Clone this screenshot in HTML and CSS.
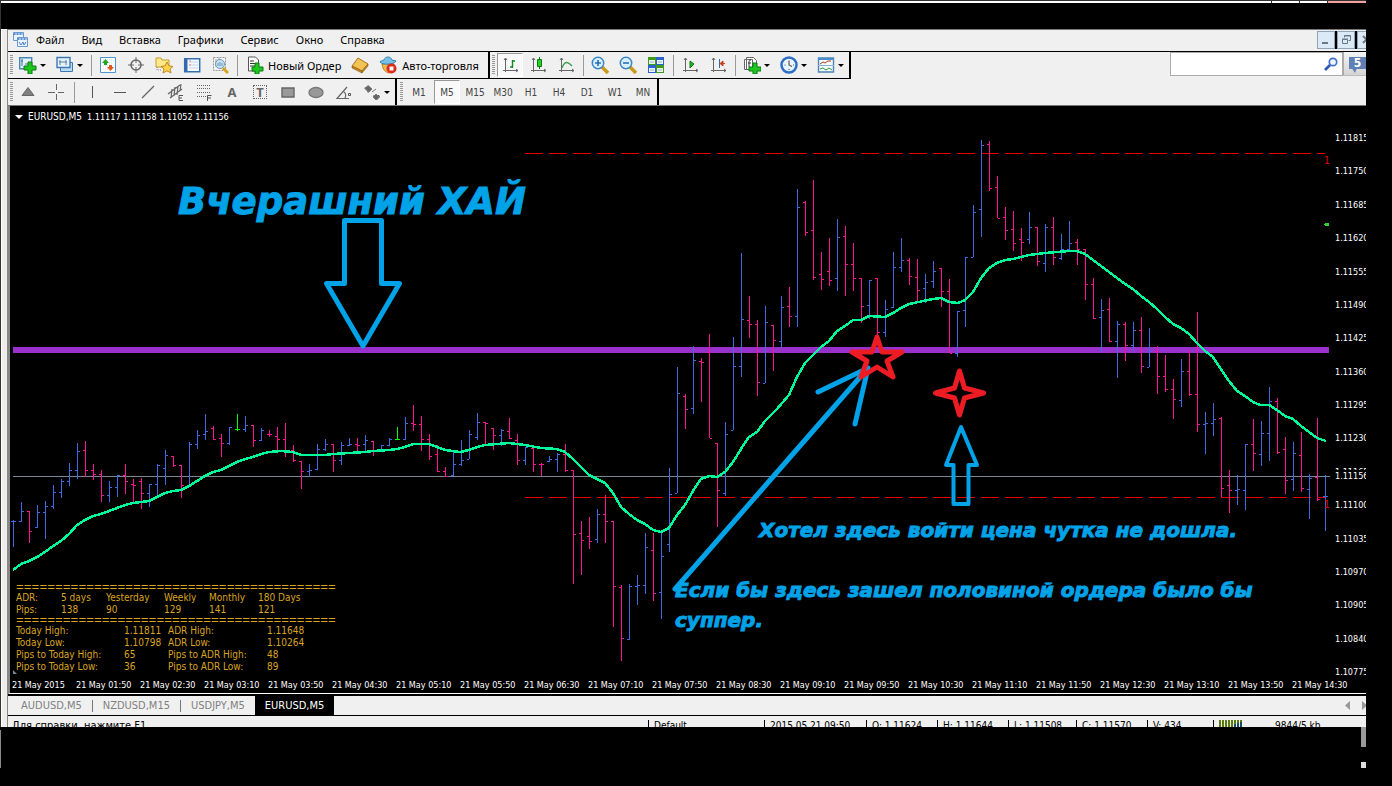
FILE: index.html
```html
<!DOCTYPE html>
<html lang="ru">
<head>
<meta charset="utf-8">
<title>EURUSD,M5</title>
<link rel="stylesheet" href="styles.css">
</head>
<body>
<div class="frame">
<div class="titlebar"><i></i><i></i><i></i></div>
<div class="window">
<header class="menubar">
<svg class="logo" width="15" height="15" viewBox="0 0 15 15"><g fill="#eaf2fb" stroke="#6a9bd0"><path d="M.5.5h10v8H.5z"/><path d="M4.500 5.500h10v9h-10z"/></g><path d="M.5 2h10M4.500 7h10" stroke="#5a8fd0" stroke-width="2" stroke-dasharray="2 1"/><path d="M6 10l2 3 2-3 1 3 2-3" stroke="#4f7fc8" fill="none"/></svg>
<nav class="menu"><a href="#">Файл</a><a href="#">Вид</a><a href="#">Вставка</a><a href="#">Графики</a><a href="#">Сервис</a><a href="#">Окно</a><a href="#">Справка</a></nav>
<div class="winbtns">
<button aria-label="Свернуть"><svg width="14" height="14"><path d="M3 10h6" stroke="#6c7a88" stroke-width="2"/></svg></button>
<button aria-label="Восстановить"><svg width="14" height="14" fill="none" stroke="#6c7a88"><path d="M5.500 4.500v-2h6v5h-2M3.500 6.500h5v4h-5zM3 6h6M5 3h7"/></svg></button>
<button aria-label="Закрыть"><svg width="14" height="14"><path d="M4 3l7 7M11 3l-7 7" stroke="#6c7a88" stroke-width="2"/></svg></button>
</div>
</header>

<div class="bars">
<div class="toolrow">
<div class="group">
<span class="grip"></span>
<button class="drop" aria-label="Новый график"><svg class="ic" viewBox="0 0 18 18"><path d="M.7 1.700h12v11h-12z" fill="#e4f1fb" stroke="#4a86b8" stroke-width="1.400"/><path d="M3 3v7M2 5h2M6 8h3" stroke="#3b6e9a"/><path d="M9 6h4v4h4v4h-4v4H9v-4H5v-4h4z" fill="#1fc61f" stroke="#0b7a10"/></svg><b class="ar"></b></button>
<button class="drop" aria-label="Профили"><svg class="ic" viewBox="0 0 18 18"><path d="M4.500 6.500h12v9h-12z" fill="#bcdcf3" stroke="#3c78b4"/><path d="M1 1.500h13v10H1z" fill="#e6f2fb" stroke="#3c78b4" stroke-width="1.400"/><path d="M4 4v5M3 6h8M10 4v5" stroke="#55809f"/></svg><b class="ar"></b></button>
<i class="sep"></i>
<button aria-label="Обзор рынка"><svg class="ic" viewBox="0 0 18 18"><path d="M1.500 1.500h15v15h-15z" fill="#fff" stroke="#4e94cf"/><path d="M4 4h10M4 7h10M4 10h10M4 13h10" stroke="#cfd8df" stroke-dasharray="1 1"/><path d="M6.500 3l3.500 4H8v2H5V7H3z" fill="#1fa81f"/><path d="M11.500 15l3.500-4h-2V9h-3v2H8z" fill="#e2551c"/></svg></button>
<button aria-label="Окно данных"><svg class="ic" viewBox="0 0 18 18" fill="none" stroke="#666"><circle cx="9" cy="9" r="5" stroke-width="1.500"/><path d="M9 1v6M9 11v6M1 9h6M11 9h6"/></svg></button>
<button aria-label="Навигатор"><svg class="ic" viewBox="0 0 18 18"><path d="M1 2h5l1 2h7v7H1z" fill="#ffe98a" stroke="#c79b2a"/><path d="M2 11v3h4" stroke="#888" fill="none" stroke-dasharray="1 1"/><path d="M12 6l2 4 4 .4-3 2.600 1 4-4-2.200L8 17l1-4-3-2.600 4-.4z" fill="#ffd34d" stroke="#c08a18"/></svg></button>
<button aria-label="Терминал"><svg class="ic" viewBox="0 0 18 18"><path d="M1.700 2.700h15v13h-15z" fill="#f6fbff" stroke="#2f6fb2" stroke-width="1.500"/><path d="M3 3v12" stroke="#3568b0" stroke-width="3"/><path d="M6 6h9M6 9h9M6 12h9" stroke="#c6d5e6"/><path d="M6.500 5h1M6.500 9h1" stroke="#c22"/></svg></button>
<button aria-label="Тестер стратегий"><svg class="ic" viewBox="0 0 18 18"><path d="M2.500 1.500h12v13h-12z" fill="#f4f4f4" stroke="#999" stroke-dasharray="2 1"/><path d="M5 3v8M8 2v9" stroke="#999"/><circle cx="9" cy="8" r="4.500" fill="#bfe3fa" fill-opacity=".9" stroke="#7198b5"/><path d="M7 7v3M9 6v4M11 7v3" stroke="#6f93ae"/><path d="M12 12l5 5" stroke="#d8a520" stroke-width="3"/></svg></button>
<i class="sep"></i>
<button class="wide order"><svg class="ic" viewBox="0 0 18 18"><path d="M2.500 1h7l3 3v11h-10z" fill="#fff" stroke="#555"/><path d="M4 5h4M4 7.500h6M4 10h5" stroke="#333"/><path d="M9 7h4v4h4v4h-4v3H9v-3H6v-4h3z" fill="#1fc61f" stroke="#0b7a10"/></svg><span>Новый Ордер</span></button>
<button aria-label="MetaEditor"><svg class="ic" viewBox="0 0 18 18"><path d="M1 10l6-8 10 6-6 7z" fill="#f3c355" stroke="#a87218"/><path d="M1 10v2l10 5v-2zM11 17l6-7V8l-6 7z" fill="#c98a22" stroke="#8b5c12" stroke-width=".6"/></svg></button>
<button class="wide auto"><svg class="ic" viewBox="0 0 18 18"><path d="M3 8c1 6 3 8 7 9 4-2 5-5 5-9z" fill="#f2b84d" stroke="#bd7d1c"/><path d="M1 6c2 3 14 3 16-1-1-1-3 0-4-1-1-4-7-4-8 0-2 1-4 1-4 2z" fill="#79c0e8" stroke="#3483b5"/><circle cx="12.500" cy="12.500" r="5" fill="#dd2a1b"/><path d="M10.500 10.500h4v4h-4z" fill="#fff"/></svg><span>Авто-торговля</span></button>
</div>
<div class="group">
<span class="grip"></span>
<button class="on" aria-label="Бары"><svg class="ic" viewBox="0 0 18 18"><path d="M4.500 2v14M2 14.500h15M3 4l1.500-2L6 4M15 13l2 1.500L15 16" fill="none" stroke="#666"/><path d="M11.500 4v8M11 5h3M9 11h3" stroke="#0b8a1c" stroke-width="1.400"/></svg></button>
<button aria-label="Свечи"><svg class="ic" viewBox="0 0 18 18"><path d="M4.500 2v14M2 14.500h15M3 4l1.500-2L6 4M15 13l2 1.500L15 16" fill="none" stroke="#666"/><path d="M10.500 1v12" stroke="#0b7a10"/><path d="M8.500 3.500h4v7h-4z" fill="#27d027" stroke="#0b7a10"/></svg></button>
<button aria-label="Линия"><svg class="ic" viewBox="0 0 18 18"><path d="M4.500 2v14M2 14.500h15M3 4l1.500-2L6 4M15 13l2 1.500L15 16" fill="none" stroke="#666"/><path d="M5 12c3-8 6-6 10-2" fill="none" stroke="#3da04a" stroke-width="1.300"/></svg></button>
<i class="sep"></i>
<button aria-label="Увеличить"><svg class="ic" viewBox="0 0 18 18"><path d="M11 11l6 6" stroke="#c9991a" stroke-width="3.500"/><circle cx="7" cy="7" r="5.700" fill="#d8f0fd" stroke="#3a86c4" stroke-width="1.500"/><path d="M4 7h6M7 4v6" stroke="#2a6fb0" stroke-width="1.600"/></svg></button>
<button aria-label="Уменьшить"><svg class="ic" viewBox="0 0 18 18"><path d="M11 11l6 6" stroke="#c9991a" stroke-width="3.500"/><circle cx="7" cy="7" r="5.700" fill="#d8f0fd" stroke="#3a86c4" stroke-width="1.500"/><path d="M4 7h6" stroke="#2a6fb0" stroke-width="1.600"/></svg></button>
<button aria-label="Окна мозаикой"><svg class="ic" viewBox="0 0 18 18"><path d="M1 1h8v8H1zM9 9h8v8H9z" fill="#3d9a1c"/><path d="M9 1h8v8H9zM1 9h8v8H1z" fill="#2b61d0"/><path d="M2 4h6v4H2zM10 4h6v4h-6zM2 12h6v4H2zM10 12h6v4h-6z" fill="#eef6ee"/><path d="M3 6h4M11 6h4M3 14h4M11 14h4" stroke="#9cb6c8"/></svg></button>
<i class="sep"></i>
<button aria-label="Автосдвиг"><svg class="ic" viewBox="0 0 18 18"><path d="M4.500 2v14M2 14.500h15M3 4l1.500-2L6 4M15 13l2 1.500L15 16" fill="none" stroke="#666"/><path d="M9 5l4 3-4 4z" fill="#27b527" stroke="#0b7a10"/></svg></button>
<button aria-label="Сдвиг графика"><svg class="ic" viewBox="0 0 18 18"><path d="M4.500 2v14M2 14.500h15M3 4l1.500-2L6 4M15 13l2 1.500L15 16" fill="none" stroke="#666"/><path d="M10.500 3v9" stroke="#2d6ca8"/><path d="M16 7.500h-4M14 5l-3 2.500L14 10z" stroke="#c8401c" fill="#c8401c"/></svg></button>
<i class="sep"></i>
<button class="drop" aria-label="Индикаторы"><svg class="ic" viewBox="0 0 18 18"><path d="M1.500 3.500h8v10h-8zM3.500 1.500h7l3 3v9h-10z" fill="#fff" stroke="#666"/><path d="M8 4c-2 0-2 1-2 3v4M5 7h3" stroke="#333" fill="none"/><path d="M10 7h4v4h4v4h-4v3h-4v-3H6v-4h4z" fill="#1fc61f" stroke="#0b7a10"/></svg><b class="ar"></b></button>
<button class="drop" aria-label="Периоды"><svg class="ic" viewBox="0 0 18 18"><circle cx="9" cy="9" r="7.500" fill="#e8f4ff" stroke="#2d6fc4" stroke-width="2.500"/><path d="M9 4.500V9l3 1.500M4.500 9h1M13 9h1M9 13v1" fill="none" stroke="#555" stroke-width="1.200"/></svg><b class="ar"></b></button>
<button class="drop" aria-label="Шаблоны"><svg class="ic" viewBox="0 0 18 18"><path d="M1.500 2h15v14h-15z" fill="#f6fbff" stroke="#4b83b5" stroke-width="1.400"/><path d="M1 3h16" stroke="#4b8ccc" stroke-width="2"/><path d="M1 9.500h16" stroke="#8fb0cc"/><path d="M3 8l3-2 2 1 3-2 3 0" stroke="#b03a1c" fill="none"/><path d="M3 13l3-1 3 2 3-2 3 2" stroke="#2c9a3c" fill="none"/></svg><b class="ar"></b></button>
</div>
<div class="searchbox"><input type="text" aria-label="Поиск"><svg width="14" height="14" viewBox="0 0 14 14"><circle cx="9" cy="5" r="3.700" fill="#eef5ff" stroke="#3f6fcf" stroke-width="1.700"/><path d="M6 8l-5 5" stroke="#2c55b8" stroke-width="2.600"/></svg></div>
<button class="chat" aria-label="Сообщения"><span>5</span></button>
</div>

<div class="toolrow two">
<div class="group">
<span class="grip"></span>
<button aria-label="Курсор"><svg class="ic" viewBox="0 0 18 18"><path d="M9 4.500l6 8H3z" fill="#808080" stroke="#666"/></svg></button>
<button aria-label="Перекрестие"><svg class="ic" viewBox="0 0 18 18"><path d="M9.500 1v6M9.500 11v6M1 9.500h7M11 9.500h6" stroke="#666" fill="none"/></svg></button>
<i class="sep"></i>
<button aria-label="Вертикальная линия"><svg class="ic" viewBox="0 0 18 18"><path d="M9.500 3v12" stroke="#555"/></svg></button>
<button aria-label="Горизонтальная линия"><svg class="ic" viewBox="0 0 18 18"><path d="M3 9.500h12" stroke="#555"/></svg></button>
<button aria-label="Трендовая линия"><svg class="ic" viewBox="0 0 18 18"><path d="M3 15L15 3" stroke="#666" stroke-width="1.300"/></svg></button>
<button aria-label="Канал"><svg class="ic" viewBox="0 0 18 18"><path d="M1 11l12-9M3 15l12-9M5 6l-1 9M8 4l-1 9M11 3l-1 9M14 1l-1 7" stroke="#666" stroke-width="1.200"/><path d="M16 12.500h-4v5h4M12 15h3" stroke="#555" fill="none"/></svg></button>
<button aria-label="Фибоначчи"><svg class="ic" viewBox="0 0 18 18"><path d="M2 2.500h14M2 5.500h14M2 9.500h14M2 13.500h9" stroke="#666" stroke-dasharray="1 1"/><path d="M12.500 18v-5.500h4M12 15h4" stroke="#555" fill="none"/></svg></button>
<button aria-label="Текст"><span class="glyph">A</span></button>
<button aria-label="Метка"><span class="glyph tbox">T</span></button>
<button aria-label="Прямоугольник"><svg class="ic" viewBox="0 0 18 18"><path d="M3 5h12v9H3z" fill="#999" stroke="#666" stroke-width="1.400"/></svg></button>
<button aria-label="Эллипс"><svg class="ic" viewBox="0 0 18 18"><ellipse cx="9" cy="9.500" rx="7" ry="5" fill="#999" stroke="#777" stroke-width="1.400"/></svg></button>
<button aria-label="Угол"><svg class="ic" viewBox="0 0 18 18"><path d="M14 15.500H2L12 4M8 8c3 2 3 5 2 7" stroke="#666" fill="none" stroke-width="1.200"/><path d="M13.500 10.500h2v2h-2z" fill="none" stroke="#555"/></svg></button>
<button class="drop" aria-label="Стрелки"><svg class="ic" viewBox="0 0 18 18"><path d="M5 2l4 4-4 4-1-2-3-3 3-1zM14 17l-4-4 1-1h5l1 2z" fill="#555"/><path d="M5 3l4 3-3 3-4-4zM9 9l4-3M13 11l3 3-3 3-3-3z" fill="#666" stroke="#777"/></svg><b class="ar"></b></button>
</div>
<div class="group tf">
<span class="grip"></span>
<button>M1</button><button class="on">M5</button><button>M15</button><button>M30</button><button>H1</button><button>H4</button><button>D1</button><button>W1</button><button>MN</button>
</div>
</div>
</div>

<main class="chart">
<svg class="plot" viewBox="10 106 1325 568">
<rect x="13" y="347" width="1316" height="6" fill="#9932cc"/>
<g stroke="#e60000" stroke-dasharray="18 6"><path d="M525 153.500H1325M525 497.500H1325"/></g>
<path d="M13 476.500H1330" stroke="#778899"/>
<g id="bars" shape-rendering="crispEdges" fill="none"></g>
<polyline id="ma" fill="none" stroke="#00fa9a" stroke-width="2.500" stroke-linejoin="round" shape-rendering="crispEdges"/>
<path d="M1324 224h1v-1h4v3h-4v-1h-1z" fill="#32cd32"/>
<g class="mark"><text x="1324" y="164">1</text><text x="1324" y="508">1</text></g>
<path d="M13 670v5h5z" fill="#778899"/>
<g fill="none" stroke="#00a2e8" stroke-width="5" stroke-linejoin="round" stroke-linecap="round">
<path d="M344.500 220.500h37v63h18L363 346l-36.500-62.500h18z"/>
<path d="M961 427l-15 38h7.500v39h15v-39h8.500z" stroke-width="4"/>
<path d="M675 589L868 368L818 392M868 368L855 424"/>
</g>
<g fill="none" stroke="#ed1c24" stroke-width="5" stroke-linejoin="round">
<path d="M877 337l5 15h20l-15 9 6 16-16-10-16 10 6-16-15-9h20z"/>
<path d="M959.500 371l5 17 19 5-19 5-5 17-5-17-19-5 19-5z"/>
</g>
<g class="note"><text class="big" x="178" y="214">Вчерашний ХАЙ</text><text x="759" y="537">Хотел здесь войти цена чутка не дошла.</text><text x="675" y="597">Если бы здесь зашел половиной ордера было бы</text><text x="675" y="627">суппер.</text></g>
</svg>
<div class="prices">
<span>1.11815</span><span>1.11750</span><span>1.11685</span><span>1.11620</span><span>1.11555</span><span>1.11490</span><span>1.11425</span><span>1.11360</span><span>1.11295</span><span>1.11230</span><span>1.11165</span><span>1.11100</span><span>1.11035</span><span>1.10970</span><span>1.10905</span><span>1.10840</span><span>1.10775</span>
<em>1.11156</em>
</div>
<div class="times"><span>21 May 2015</span><span>21 May 01:50</span><span>21 May 02:30</span><span>21 May 03:10</span><span>21 May 03:50</span><span>21 May 04:30</span><span>21 May 05:10</span><span>21 May 05:50</span><span>21 May 06:30</span><span>21 May 07:10</span><span>21 May 07:50</span><span>21 May 08:30</span><span>21 May 09:10</span><span>21 May 09:50</span><span>21 May 10:30</span><span>21 May 11:10</span><span>21 May 11:50</span><span>21 May 12:30</span><span>21 May 13:10</span><span>21 May 13:50</span><span>21 May 14:30</span></div>
<div class="symbol"><b class="tri"></b><span class="name">EURUSD,M5</span><span>1.11117 1.11158 1.11052 1.11156</span></div>
<div class="adr">
<div class="rule">=========================================</div>
<div class="r1"><span>ADR:</span><span>5 days</span><span>Yesterday</span><span>Weekly</span><span>Monthly</span><span>180 Days</span></div>
<div class="r1"><span>Pips:</span><span>138</span><span>90</span><span>129</span><span>141</span><span>121</span></div>
<div class="rule">=========================================</div>
<div class="r2"><span>Today High:</span><span>1.11811</span><span>ADR High:</span><span>1.11648</span></div>
<div class="r2"><span>Today Low:</span><span>1.10798</span><span>ADR Low:</span><span>1.10264</span></div>
<div class="r2"><span>Pips to Today High:</span><span>65</span><span>Pips to ADR High:</span><span>48</span></div>
<div class="r2"><span>Pips to Today Low:</span><span>36</span><span>Pips to ADR Low:</span><span>89</span></div>
</div>
</main>

<div class="tabs"><a href="#">AUDUSD,M5</a><a href="#">NZDUSD,M15</a><a href="#">USDJPY,M5</a><a href="#" class="cur">EURUSD,M5</a><svg width="22" height="9"><path d="M6 0v9L1 4.500zM18 0v9l5-4.500z" fill="#999"/></svg></div>
<footer class="status"><span class="help">Для справки, нажмите F1</span><span class="c115">Default</span><span class="c103">2015.05.21 09:50</span><span class="c71">O: 1.11624</span><span class="c71">H: 1.11644</span><span class="c68">L: 1.11508</span><span class="c71">C: 1.11570</span><span class="c66">V: 434</span><span class="net"><svg width="24" height="14"><path d="M1 0v12M4 0v12M7 0v12M10 0v12M13 0v12M16 0v12M19 0v12M22 0v12" stroke="#5a7a10" stroke-width="2"/><path d="M16 4v8M19 3v9M22 2v10" stroke="#1a4a6a" stroke-width="2"/></svg>9844/5 kb</span></footer>
</div>
<div class="below"><i></i><div><b></b><b></b></div></div>
</div>
<script src="chart.js"></script>
</body>
</html>
```
FILE: styles.css
```css
* { box-sizing: border-box; }
body { margin: 0; background: #000; font-family: "DejaVu Sans Condensed", "DejaVu Sans", sans-serif; font-size: 10px; color: #000; }
button { background: none; border: 0; padding: 0; margin: 0; color: inherit; font: inherit; }
a { color: inherit; text-decoration: none; }
svg { display: block; flex: none; }
.frame { margin-right: 26px; overflow: hidden; }
.titlebar { height: 29px; border-top: 1px solid #333; border-left: 1px solid #333; display: flex; justify-content: flex-end; background: linear-gradient(#fff 2px, #000 2px); }
.titlebar i { width: 28px; height: 2px; border-left: 1px solid #333; }
.titlebar i:last-child { width: 39px; background: #f2a0a0; }
.window { border-left: 1px solid #333; padding-left: 7px; background: linear-gradient(90deg, #fff 1px, #efecec 1px, #efecec 6px, #888 6px, #888 7px, #f0f0f0 7px); }
.menubar { height: 23px; border-top: 1px solid #777; border-bottom: 1px solid #000; display: flex; align-items: center; padding: 0 0 2px 5px; font: 11px "Noto Sans", sans-serif; }
.menu { display: flex; gap: 17px; margin-left: 8px; flex: 1; }
.winbtns { display: flex; gap: 2px; width: 49px; height: 18px; overflow: hidden; background: #000; }
.winbtns button { flex: none; width: 18px; border: 1px solid #8ea3b6; background: #dceaf7; padding: 1px; }
.bars { border-bottom: 1px solid #777; height: 54px; }
.toolrow { display: flex; height: 27px; }
.group { display: flex; align-items: center; border: 0 solid #000; border-width: 0 2px 1px 0; height: 27px; color: #444; }
.two .group { border-bottom: 0; height: 26px; }
.group button { width: 28px; height: 24px; flex: none; display: flex; align-items: center; justify-content: center; }
.group .drop { width: 37px; justify-content: flex-start; padding-left: 5px; gap: 3px; }
.group .wide { width: auto; font: 11px "Noto Sans", sans-serif; color: #000; gap: 4px; white-space: nowrap; }
.group .order { padding: 0 5px 0 6px; }
.group .auto { padding: 0 9px 0 5px; gap: 5px; }
.group .on { width: 26px; margin: 0 1px; background: #f9f9f9; border: 1px solid #fff; border-top-color: #999; border-left-color: #999; }
.grip { width: 3px; height: 20px; margin: 0 1px 0 2px; background: repeating-linear-gradient(#999 0 1px, #f0f0f0 1px 2px); }
.ic { width: 18px; height: 18px; }
.ar { border: 3px solid transparent; border-top-color: #000; border-bottom: 0; }
.sep { width: 1px; height: 21px; background: #999; margin: 0 2px 0 3px; }
.two .sep { margin: 0 3px 0 4px; }
.glyph { font: bold 13px "Noto Sans", sans-serif; color: #666; line-height: 14px; }
.tbox { border: 1px dotted #666; width: 14px; height: 14px; line-height: 12px; text-align: center; }
.tf .grip { margin: 0 2px 0 3px; }
.searchbox { margin-left: auto; display: flex; align-items: center; width: 173px; height: 24px; background: #fff; border: 1px solid #aaa; padding-right: 4px; }
.searchbox input { flex: 1; min-width: 0; border: 0; background: none; outline: 0; }
.chat { width: 23px; height: 24px; border-left: 1px solid #aaa; border-bottom: 1px solid #bbb; background: linear-gradient(#f4f4f4, #d4d4d4); padding: 5px 0 0 5px; display: flex; align-items: flex-start; }
.chat span { width: 17px; height: 16px; background: #5f7fb5; color: #fff; font: bold 12px/13px "DejaVu Sans Condensed", sans-serif; text-align: center; clip-path: polygon(0 0, 100% 0, 100% 75%, 45% 75%, 35% 100%, 20% 75%, 0 75%); }
.chart { position: relative; background: #000; color: #fff; border-left: 2px solid #888; display: grid; grid-template-columns: minmax(0, 1fr) 31px; font-size: 9px; border-bottom: 1px solid #fff; height: 588px; grid-template-rows: 568px 19px; overflow: hidden; }
.plot { width: 100%; height: 568px; }
.mark { fill: #e60000; font-size: 10px; }
.note { fill: #00a2e8; stroke: #00a2e8; stroke-width: 1px; font: italic bold 20px "DejaVu Sans", sans-serif; }
.note .big { font-size: 37px; }
.prices { position: relative; display: flex; flex-direction: column; justify-content: space-between; padding-top: 26px; line-height: 12px; margin-bottom: -4px; }
.prices em { position: absolute; left: 0; top: 364px; font-style: normal; background: #000; }
.times { grid-column: 1 / 3; display: flex; padding: 5px 0 0 2px; line-height: 12px; white-space: nowrap; }
.times span { width: 64px; flex: none; }
.symbol { position: absolute; left: 5px; top: 5px; display: flex; align-items: center; gap: 5px; line-height: 12px; white-space: pre; }
.symbol .name { font-size: 10px; }
.tri { border: 4px solid transparent; border-top-color: #fff; border-bottom: 0; }
.adr { position: absolute; left: 6px; top: 477px; color: #daa520; font-size: 10px; line-height: 12px; }
.rule { font: 13px/9px "Liberation Mono", monospace; }
.r1 { display: grid; grid-template-columns: 45px 45px 58px 45px 49px 50px; white-space: nowrap; }
.r2 { display: grid; grid-template-columns: 108px 44px 99px 50px; white-space: nowrap; }
.tabs { height: 22px; border-top: 2px solid #000; border-bottom: 1px solid #000; display: flex; align-items: center; color: #808080; padding-left: 3px; font-size: 11px; }
.tabs a { padding: 0 10px; border-right: 1px solid #777; line-height: 12px; }
.tabs a:nth-child(3) { border: 0; }
.tabs .cur { background: #000; color: #fff; line-height: 19px; height: 19px; border: 0; }
.tabs svg { margin-left: auto; }
.status { height: 11px; overflow: hidden; display: flex; padding: 4px 0 0 4px; line-height: 12px; white-space: nowrap; }
.status span { border-left: 1px solid #000; padding-left: 5px; flex: none; height: 12px; }
.status .help { flex: 1; border: 0; padding: 0; font-size: 11px; }
.status .c115 { width: 116px; }
.status .c103 { width: 102px; }
.status .c71 { width: 71px; }
.status .c68 { width: 68px; }
.status .c66 { width: 66px; }
.status .net { width: 153px; display: flex; gap: 32px; }
.below { display: flex; justify-content: space-between; height: 41px; }
.below i { width: 1px; background: #888; margin-top: 3px; }
.below div { width: 5px; display: flex; flex-direction: column; justify-content: space-between; }
.below b { height: 20px; background: #999; }
.below b + b { height: 6px; background: #ddd; }
```
FILE: chart.js
```js
// One entry per bar: colour, high, low, open, close
const bars = `b 520 547 521 521,b 502 522 521 511,p 511 543 511 531,b 505 528 527 512,b 501 539 512 506,b 485 509 506 492,b 479 498 492 481,b 463 486 481 470,b 443 479 470 451,p 441 477 450 470,p 464 480 470 474,p 470 502 474 495,b 481 502 495 487,b 475 497 487 475,p 464 494 475 481,p 479 503 484 485,p 478 509 481 493,b 484 507 493 484,b 464 497 484 465,b 450 485 468 455,p 456 467 456 465,p 465 498 465 485,b 442 486 486 444,b 430 449 444 435,b 414 440 434 431,p 426 440 428 439,p 434 457 438 443,b 427 445 443 427,g 414 431 429 429,b 416 432 429 425,p 425 447 425 440,b 428 441 440 430,p 430 437 434 434,p 427 450 436 439,p 423 457 439 451,p 445 462 450 460,p 461 489 461 471,b 464 477 471 470,b 444 470 469 449,b 439 451 449 444,p 444 472 444 460,b 442 465 460 445,b 438 446 445 444,p 438 451 444 445,b 435 451 444 440,p 441 456 441 450,b 445 452 451 445,b 438 446 445 439,g 427 440 439 439,b 417 440 439 423,p 405 431 423 424,p 416 451 424 439,p 434 460 439 456,p 445 472 454 471,p 467 477 471 476,b 452 476 475 464,b 440 466 464 460,b 430 459 459 434,b 413 440 437 422,p 422 445 422 423,p 428 450 428 435,b 429 446 435 430,p 418 439 431 438,p 434 465 440 460,b 447 465 460 447,p 447 472 448 464,p 463 476 464 464,b 456 462 461 459,b 453 472 459 454,p 444 472 454 470,p 470 584 470 534,p 521 575 533 540,p 517 549 536 541,b 509 543 539 514,p 495 543 514 521,p 521 627 521 586,p 585 661 587 638,b 584 640 639 586,b 575 605 586 585,b 533 594 585 547,p 533 601 550 593,b 532 619 592 556,b 468 552 544 494,b 367 493 493 393,p 394 429 396 409,b 346 414 408 360,p 358 402 361 362,p 334 438 352 438,p 443 527 443 490,b 422 496 493 434,b 337 430 430 366,b 253 377 366 319,p 296 338 320 324,p 320 396 324 382,b 306 383 383 322,p 325 371 325 340,b 296 348 341 307,p 287 327 306 316,b 189 327 316 207,p 201 236 202 232,p 180 280 230 277,p 252 290 274 279,p 238 286 271 280,b 219 291 278 237,p 226 296 236 264,p 243 291 264 278,p 278 323 278 306,b 280 319 305 280,p 278 335 278 332,b 300 337 332 309,b 252 308 307 267,b 238 272 267 260,p 258 285 260 276,p 259 302 277 290,b 274 303 288 282,b 261 288 281 271,p 268 307 268 291,p 279 353 291 353,b 311 357 353 311,b 257 327 310 257,b 205 257 257 212,b 140 237 209 145,p 141 191 144 188,p 176 218 187 218,p 207 240 217 230,p 211 251 229 243,p 228 261 239 242,b 212 244 239 227,p 227 266 227 261,b 224 272 263 227,p 217 265 227 257,b 234 260 258 249,b 221 250 249 243,p 239 265 242 249,p 249 300 249 284,p 278 319 284 318,b 299 352 317 310,p 298 342 309 341,b 321 378 341 324,p 322 361 324 345,b 322 351 345 330,p 317 373 330 366,b 328 367 367 351,p 346 394 351 376,p 355 392 376 389,p 379 419 389 399,b 359 407 400 371,p 350 396 371 394,p 312 432 394 424,b 412 454 424 423,b 403 436 423 419,p 417 497 418 488,p 470 513 485 490,b 475 505 490 489,b 444 510 490 444,p 419 471 444 453,b 421 466 454 433,b 387 461 433 401,p 398 454 401 452,p 437 494 449 480,b 442 491 479 453,p 432 492 455 488,b 474 519 489 478,p 418 501 477 499,b 475 531 496 496`;
const colors = { b: "#4169e1", p: "#ff1493", g: "#00ff00" };
const paths = { b: "", p: "", g: "" };
bars.split(",").forEach((row, i) => {
  const [c, h, l, o, k] = row.split(" ");
  const x = 13 + 8 * i;
  paths[c] += `M${x + 0.5} ${h}V${l}M${x - 2} ${+o + 0.5}h2`;
  paths[c] += `M${x + 1} ${+k + 0.5}h2`;
});
document.getElementById("bars").innerHTML = Object.keys(paths)
  .map((c) => `<path stroke="${colors[c]}" d="${paths[c]}"/>`).join("");

// Moving average
document.getElementById("ma").setAttribute("points",
  "13,570 21,564 29,561 37,557 45,552 53,546 61,541 69,534 77,525 85,520 93,516 101,514 109,511 117,508 125,505 133,503 149,501 157,497 165,493 173,491 181,490 189,486 197,481 205,476 213,472 221,470 229,466 237,462 245,459 253,457 261,454 269,452 281,451 293,452 301,455 325,455 333,454 349,453 365,452 373,451 389,450 397,449 405,447 413,444 429,444 437,447 445,450 460,452 469,450 477,447 485,445 509,443 525,445 541,448 557,449 565,452 573,459 581,467 589,475 597,479 605,483 613,493 621,507 629,514 637,520 645,524 653,530 661,532 669,528 677,515 685,505 693,491 701,479 709,476 717,477 725,472 733,462 741,449 749,437 757,432 765,421 777,409 789,395 797,377 805,363 813,355 821,347 829,341 837,331 845,326 853,320 861,320 869,316 885,317 893,313 901,308 909,304 933,299 941,298 949,302 958,303 965,300 973,292 981,278 989,268 997,263 1005,260 1013,259 1021,257 1029,255 1045,253 1069,251 1077,251 1085,254 1093,260 1101,266 1109,272 1117,278 1125,284 1133,289 1141,296 1149,302 1157,309 1165,317 1173,324 1181,328 1189,334 1197,343 1205,351 1213,357 1221,369 1229,381 1237,391 1245,396 1253,402 1260,405 1269,405 1277,410 1285,416 1293,419 1301,426 1309,432 1317,438 1326,441");
```
